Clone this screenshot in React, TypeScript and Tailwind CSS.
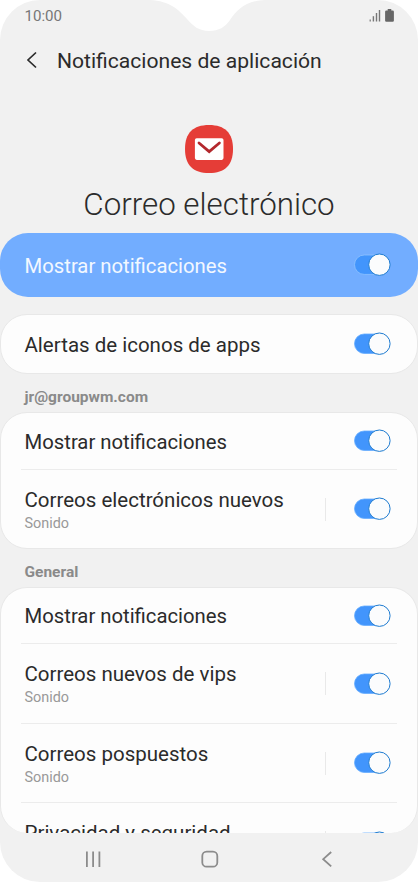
import React from 'react';

interface ToggleProps {
  outlined?: boolean;
}

const Toggle: React.FC<ToggleProps> = ({ outlined }) => (
  <svg width="38" height="24" viewBox="0 0 38 24" className="block shrink-0">
    <rect
      x="1.5"
      y="2"
      width="34"
      height="19.4"
      rx="9.7"
      fill="#4295fc"
      stroke={outlined ? '#8fc3ff' : '#62abff'}
      strokeWidth="0.8"
    />
    <circle cx="26.4" cy="11.7" r="10.7" fill="#fbfcfd" stroke="#1e7bd0" strokeWidth="1" />
  </svg>
);

interface RowProps {
  title: string;
  subtitle?: string;
  className: string;
  split?: boolean;
  last?: boolean;
}

const Row: React.FC<RowProps> = ({ title, subtitle, className, split, last }) => (
  <div className={`mx-5 flex shrink-0 items-center pl-[3.5px] pr-[6px] ${last ? '' : 'border-b border-[#ececec]'} ${className}`}>
    <div className={`flex-1 whitespace-nowrap ${split ? 'h-[43px]' : 'pt-px'}`}>
      <div className={`leading-6 text-[#2b2b2b] ${title.includes('fi') ? 'text-[20.3px]' : 'text-[20.5px]'}`}>{title}</div>
      {subtitle && <div className="mt-px text-[14.4px] leading-[22px] text-[#999]">{subtitle}</div>}
    </div>
    {split && <div className="mr-[27px] h-[23px] w-px bg-[#e9e9e9]" />}
    <Toggle />
  </div>
);

const SectionLabel: React.FC<{ children: React.ReactNode; className: string }> = ({ children, className }) => (
  <div className={`shrink-0 pl-[24.5px] text-[15.5px] leading-[22px] font-bold text-[#8a8a8a] ${className}`}>{children}</div>
);

const StatusBar = () => (
  <div className="flex h-8 shrink-0 items-center justify-between pl-[24.5px] pr-[23px]">
    <span className="text-[15.1px] text-[#777]">10:00</span>
    <svg width="27" height="16" viewBox="0 0 27 16" className="block">
      <g fill="#777">
        <rect x="1.6" y="11.5" width="1.2" height="2" />
        <rect x="4.7" y="8.2" width="1.4" height="5.3" />
        <rect x="7.8" y="5" width="1.4" height="8.5" />
        <rect x="10.8" y="2" width="1.4" height="11.5" />
      </g>
      <path d="M19.7 1h3.6v1.6h1.4q1.2 0 1.2 1.2v8.7q0 1.2-1.2 1.2h-6.4q-1.2 0-1.2-1.2V3.8q0-1.2 1.2-1.2h1.4z" fill="#666" />
    </svg>
  </div>
);

const NavBar = () => (
  <div className="h-[49px] shrink-0">
    <svg width="418" height="49" viewBox="0 0 418 49" className="block" fill="none" stroke="#8c8c8c" strokeWidth="1.8">
      <path d="M86.9 18.5V34M93.1 18.5V34M99.4 18.5V34" />
      <rect x="202.3" y="18.7" width="15" height="15" rx="4.3" />
      <path d="M331.2 19l-8 7.2 8 7.2" />
    </svg>
  </div>
);

export default function App() {
  return (
    <div className="h-[882px] w-[418px] overflow-hidden bg-white font-['Roboto',sans-serif]">
      <div className="relative flex h-full flex-col overflow-hidden rounded-[40px] bg-[#f1f1f1]">
        {/* camera notch */}
        <svg width="130" height="32" viewBox="0 0 130 32" className="absolute left-[144px] top-0">
          <path d="M6 0C26 1 35 10 43 19C49 26 55 31 65 31C75 31 81 27 86 20C93 10 101 1 121 0Z" fill="#fff" />
        </svg>
        <StatusBar />

        <div className="flex h-14 shrink-0 items-center pl-[26px]">
          <svg width="12" height="18" viewBox="0 0 12 18" fill="none" stroke="#2b2b2b" strokeWidth="1.7">
            <path d="M10 1.5L2 9l8 7.5" />
          </svg>
          <h1 className="ml-[19px] whitespace-nowrap pt-px text-[21.1px] leading-7 text-[#2b2b2b]">Notificaciones de aplicación</h1>
        </div>

        <div className="flex h-[145px] shrink-0 flex-col items-center pt-9">
          <svg width="50" height="50" viewBox="0 0 50 50" className="block">
            <path d="M25 1C41 1 49 9 49 25S41 49 25 49 1 41 1 25 9 1 25 1Z" fill="#e53d37" />
            <rect x="10.9" y="14.3" width="28.6" height="21.6" rx="1.8" fill="#fff" />
            <path d="M15 19l10.2 8.6L35.4 19" fill="none" stroke="#b3282d" strokeWidth="2.8" strokeLinecap="round" />
          </svg>
          <h2 className="mt-[11px] whitespace-nowrap text-[31.3px] font-light leading-10 text-[#2b2b2b]">Correo electrónico</h2>
        </div>

        <div className="flex h-16 shrink-0 items-center rounded-[28px] bg-[#72adff] pl-[24.5px] pr-[27px]">
          <div className="flex-1 pt-[2px] text-[20.3px] leading-6 text-[#f2f8ff]">Mostrar notificaciones</div>
          <Toggle outlined />
        </div>

        <div className="mt-[17px] shrink-0 rounded-[27px] border border-[#e8e8e8] bg-[#fdfdfd]">
          <Row title="Alertas de iconos de apps" className="h-[58px]" last />
        </div>

        <SectionLabel className="h-[38px] pt-[12px]">jr@groupwm.com</SectionLabel>
        <div className="shrink-0 rounded-[27px] border border-[#e8e8e8] bg-[#fdfdfd]">
          <Row title="Mostrar notificaciones" className="h-[57px]" />
          <Row title="Correos electrónicos nuevos" subtitle="Sonido" className="h-[78px]" split last />
        </div>

        <SectionLabel className="h-[38px] pt-[12px]">General</SectionLabel>
        <div className="min-h-0 flex-1 overflow-hidden rounded-[27px] border border-b-0 border-[#e8e8e8] bg-[#fdfdfd]">
          <Row title="Mostrar notificaciones" className="h-[56px]" />
          <Row title="Correos nuevos de vips" subtitle="Sonido" className="h-[80px]" split />
          <Row title="Correos pospuestos" subtitle="Sonido" className="h-[79px]" split />
          <Row title="Privacidad y seguridad" className="h-[79px]" split last />
        </div>
        <NavBar />
      </div>
    </div>
  );
}
